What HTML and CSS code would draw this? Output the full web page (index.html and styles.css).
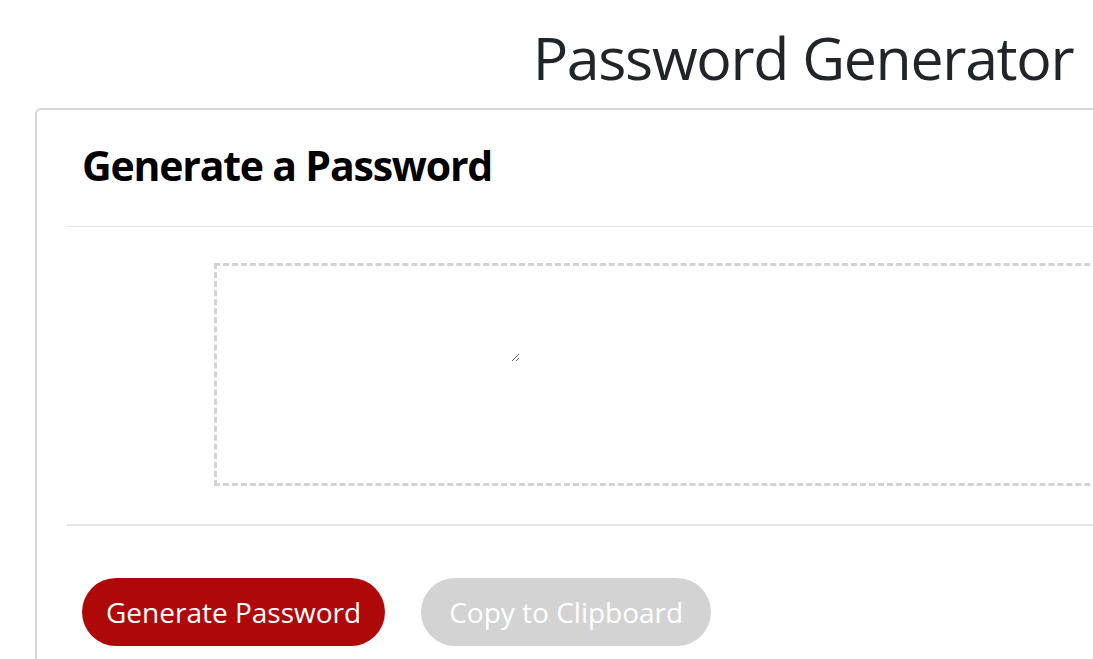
FILE: index.html
```html
<!DOCTYPE html>
<html lang="en">
<head>
<meta charset="UTF-8">
<title>Password Generator</title>
<link rel="stylesheet" href="styles.css">
</head>
<body>
<div class="wrapper">
  <h1 class="title">Password Generator</h1>
  <div class="card">
    <div class="card-header">
      <h2 class="card-title">Generate a Password</h2>
    </div>
    <div class="card-body">
      <div class="password-box">
        <textarea class="password" id="password" aria-label="Generated Password"></textarea>
      </div>
    </div>
    <div class="card-footer">
      <button class="btn btn-generate" type="button">Generate Password</button>
      <button class="btn btn-copy" type="button" disabled>Copy to Clipboard</button>
    </div>
  </div>
</div>
</body>
</html>
```

FILE: styles.css
```css
html, body {
  margin: 0;
  padding: 0;
  overflow: hidden;
  background: #ffffff;
}

body {
  font-family: "Open Sans", "Noto Sans", sans-serif;
  color: #212529;
}

.wrapper {
  width: 1606px;
}

.title {
  margin: 0;
  padding-top: 22px;
  font-size: 59px;
  font-weight: 500;
  letter-spacing: -1.3px;
  line-height: 1.2;
  text-align: center;
  color: #212529;
}

.card {
  margin: 15px 35px 0 35px;
  border: 2px solid #d6d6d6;
  border-radius: 6px;
  padding: 31px 30px 0 30px;
  height: 700px;
}

.card-header {
  padding: 0 15px 36px 15px;
  border-bottom: 1px solid #e5e5e5;
}

.card-title {
  margin: 0;
  font-size: 41px;
  font-weight: 700;
  letter-spacing: -1.2px;
  line-height: 1.2;
  color: #000000;
}

.card-body {
  padding: 36px 0 38px 147px;
  border-bottom: 2px solid #e5e5e5;
}

.password-box {
  border: 3px dashed #d3d3d3;
  height: 217px;
}

.password {
  display: block;
  width: 303px;
  height: 96px;
  border: none;
  padding: 0;
  margin: 0;
  background: transparent;
  outline: none;
}

.card-footer {
  display: flex;
  gap: 36px;
  padding: 52px 15px 0 15px;
}

.btn {
  height: 68px;
  padding: 0 24px;
  border: none;
  border-radius: 34px;
  font-family: "Open Sans", "Noto Sans", sans-serif;
  font-size: 28px;
  color: #ffffff;
  cursor: pointer;
}

.btn-generate {
  background: #af0808;
}

.btn-copy {
  background: #d3d3d3;
  color: #ffffff;
  padding: 0 28px;
}
```
